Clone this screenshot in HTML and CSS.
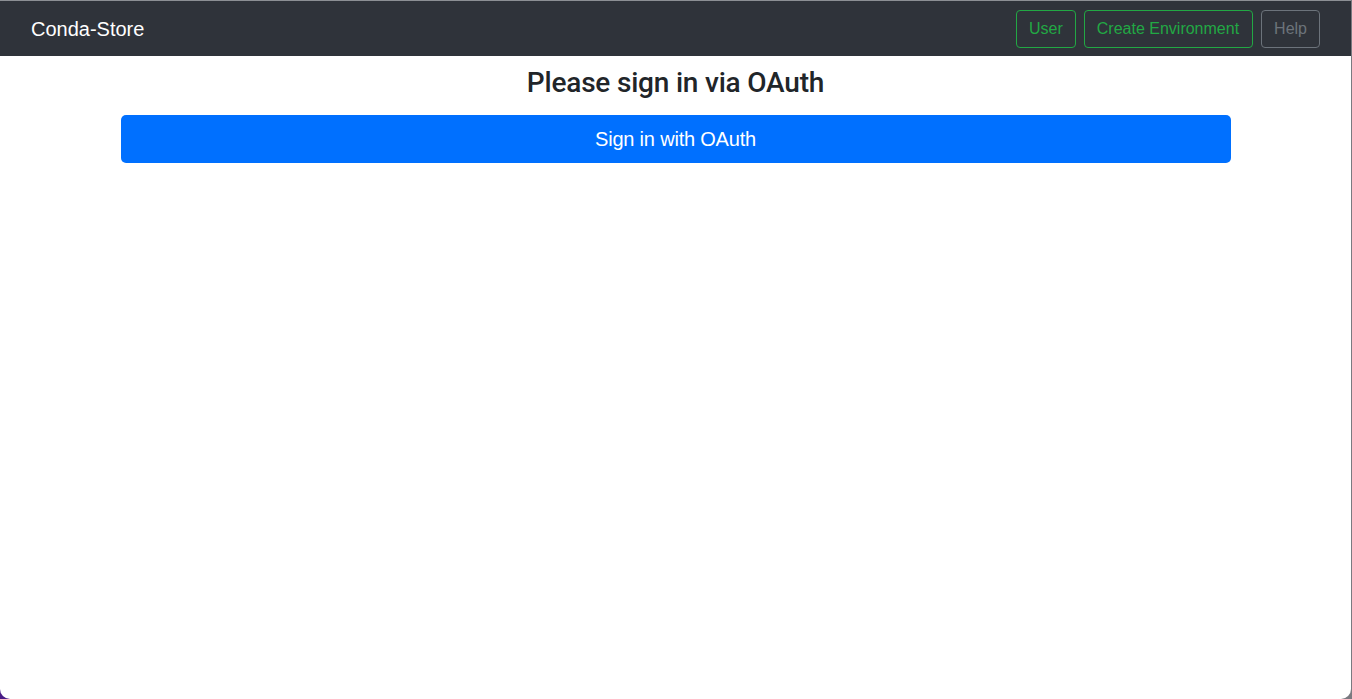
FILE: index.html
```html
<!DOCTYPE html>
<html lang="en">
<head>
<meta charset="utf-8">
<title>Conda-Store</title>
<link rel="stylesheet" href="styles.css">
</head>
<body>
<div class="window">
  <nav class="navbar">
    <a class="brand" href="#">Conda-Store</a>
    <div class="nav-actions">
      <a class="btn btn-outline-success" href="#">User</a>
      <a class="btn btn-outline-success btn-wide" href="#">Create Environment</a>
      <a class="btn btn-outline-secondary" href="#">Help</a>
    </div>
  </nav>
  <main class="container">
    <h3 class="title">Please sign in via OAuth</h3>
    <a class="btn-primary-lg" href="#">Sign in with OAuth</a>
  </main>
</div>
</body>
</html>
```
FILE: styles.css
```css
* { box-sizing: border-box; }
html {
  background: linear-gradient(90deg, #4a1c86 0%, #7a7a80 100%);
  height: 100%;
}
body {
  margin: 0;
  height: 100%;
  font-family: "Liberation Sans", Arial, sans-serif;
  color: #212529;
}
.window {
  width: calc(100% - 1px);
  height: 100%;
  background: #fff;
  border-top: 1px solid #8c8f94;
  border-radius: 0 0 10px 10px;
  overflow: hidden;
  display: flex;
  flex-direction: column;
}
.navbar {
  height: 55px;
  background: #2f333a;
  display: flex;
  align-items: center;
  justify-content: space-between;
  padding: 0 31px 0 31px;
}
.brand {
  color: #fff;
  font-size: 20px;
  text-decoration: none;
  line-height: 30px;
}
.nav-actions {
  display: flex;
  gap: 8px;
  padding-top: 1px;
}
.btn {
  display: inline-block;
  font-size: 16px;
  line-height: 24px;
  padding: 6px 12px;
  border: 1px solid;
  border-radius: 4px;
  text-decoration: none;
}
.btn-wide {
  padding-right: 13px;
}
.btn-outline-success {
  color: #22a844;
  border-color: #22a844;
}
.btn-outline-secondary {
  color: #6c737b;
  border-color: #6c737b;
}
.container {
  width: 1110px;
  margin: 0 auto;
  display: flex;
  flex-direction: column;
  align-items: stretch;
}
.title {
  margin: 10px 0 15px;
  text-align: center;
  font-family: Roboto, "Liberation Sans", sans-serif;
  font-weight: 500;
  font-size: 28px;
  letter-spacing: -0.2px;
  line-height: 1.2;
  color: #212529;
}
.btn-primary-lg {
  display: block;
  background: #0070ff;
  color: #fff;
  text-align: center;
  text-decoration: none;
  font-size: 20px;
  letter-spacing: -0.2px;
  line-height: 30px;
  padding: 9px 16px;
  border-radius: 5px;
}
```
